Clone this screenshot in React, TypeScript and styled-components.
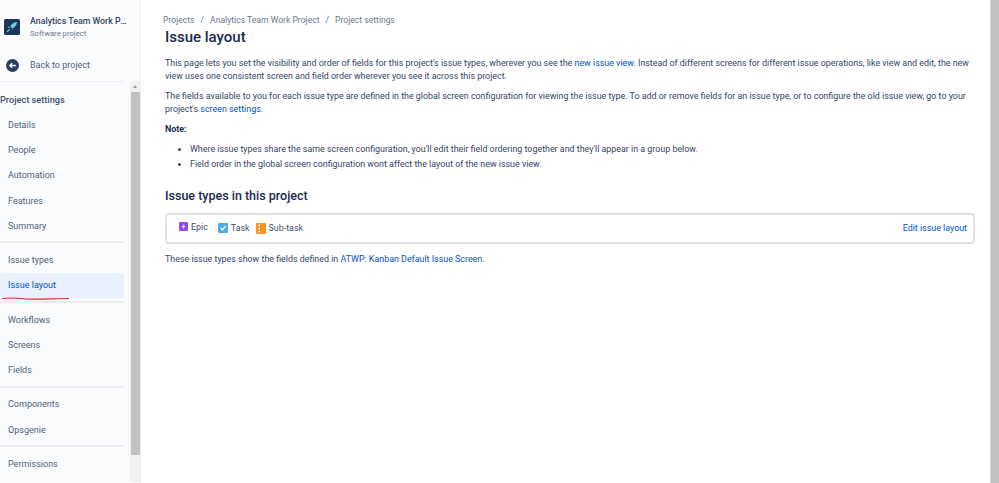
import React from "react";
import styled, { createGlobalStyle } from "styled-components";

const Global = createGlobalStyle`
  html, body {
    margin: 0;
    padding: 0;
    background: #fff;
  }
  * {
    box-sizing: border-box;
  }
`;

const Page = styled.div`
  width: 999px;
  height: 483px;
  overflow: hidden;
  display: flex;
  font-family: "Roboto", "Noto Sans", sans-serif;
  font-size: 8.9px;
  color: #344563;
  background: #fff;
`;

const Sidebar = styled.aside`
  position: relative;
  flex: 0 0 141px;
  height: 483px;
  background: #fafbfc;
  border-right: 1px solid #eef0f3;
  overflow: hidden;
`;

const ProjectHeader = styled.div`
  display: flex;
  align-items: center;
  gap: 10px;
  padding: 2px 0 0 4px;
  height: 52px;
`;

const ProjectText = styled.div`
  min-width: 0;
  width: 99px;
`;

const ProjectName = styled.div`
  font-size: 8.8px;
  font-weight: 500;
  line-height: 12px;
  color: #344563;
  white-space: nowrap;
  overflow: hidden;
  text-overflow: ellipsis;
`;

const ProjectType = styled.div`
  margin-top: 1px;
  font-size: 7.7px;
  line-height: 12px;
  color: #6b778c;
`;

const BackRow = styled.div`
  display: flex;
  align-items: center;
  gap: 11px;
  padding-left: 6px;
  height: 26px;
  font-size: 9px;
  color: #505f79;
`;

const SideBody = styled.div`
  display: flex;
  margin-top: 3px;
`;

const Nav = styled.nav`
  width: 124px;
  border-top: 1px solid #ebecf0;
`;

const NavTitle = styled.div`
  font-size: 9.2px;
  font-weight: 500;
  line-height: 13px;
  color: #42526e;
  padding-top: 11px;
  height: 30px;
`;

const NavGroup = styled.div`
  padding-bottom: 3px;
  margin-bottom: 3.9px;
  border-bottom: 2px solid #ebecf0;

  &:last-child {
    border-bottom: none;
  }
`;

const NavItem = styled.div<{ $active?: boolean }>`
  height: 25.3px;
  display: flex;
  align-items: center;
  padding-left: 8px;
  font-size: 9px;
  border-radius: 3px;
  color: ${(p) => (p.$active ? "#0052cc" : "#505f79")};
  background: ${(p) => (p.$active ? "#e8f1fd" : "transparent")};
`;

const ScrollTrack = styled.div`
  margin-left: 6px;
  width: 10px;
  height: 401px;
  background: #f1f1f1;
  display: flex;
  flex-direction: column;
  align-items: center;
`;

const ScrollArrow = styled.div`
  width: 0;
  height: 0;
  margin: 4px 0 4px;
  border-left: 2.5px solid transparent;
  border-right: 2.5px solid transparent;
  border-bottom: 3px solid #9a9a9a;
`;

const ScrollThumb = styled.div`
  width: 9px;
  height: 363px;
  background: #c1c1c1;
`;

const RedMark = styled.svg`
  position: absolute;
  left: 2px;
  top: 297px;
`;

const Main = styled.main`
  flex: 1;
  min-width: 0;
  padding: 14px 15px 0 24px;
`;

const Breadcrumbs = styled.div`
  display: flex;
  gap: 6px;
  margin-left: -2px;
  font-size: 8.6px;
  line-height: 12px;
  color: #6b778c;
`;

const Title = styled.h1`
  margin: 0 0 9px;
  font-size: 15px;
  font-weight: 500;
  line-height: 22px;
  color: #172b4d;
`;

const Para = styled.p`
  margin: 0 0 7px;
  line-height: 13px;
`;

const Link = styled.a`
  color: #0052cc;
  text-decoration: none;
`;

const NoteLabel = styled.div`
  margin-bottom: 7px;
  font-weight: 700;
  line-height: 13px;
  color: #172b4d;
`;

const BulletList = styled.ul`
  margin: 0;
  padding: 0 0 0 25px;
`;

const Bullet = styled.li`
  line-height: 13px;
  margin-bottom: 2px;
`;

const Heading = styled.h2`
  margin: 16px 0 8px;
  font-size: 12.5px;
  font-weight: 500;
  line-height: 18px;
  color: #172b4d;
`;

const Card = styled.div`
  height: 31px;
  border: 2px solid #dfe1e6;
  border-radius: 4px;
  display: flex;
  align-items: center;
  justify-content: space-between;
  padding: 0 6px 2px 12px;
`;

const TypeList = styled.div`
  display: flex;
  align-items: flex-start;
`;

const TypeItem = styled.div<{ $low?: boolean; $after: number }>`
  display: flex;
  align-items: center;
  gap: 3px;
  margin-top: ${(p) => (p.$low ? "1px" : "0")};
  margin-right: ${(p) => p.$after}px;
  color: #42526e;
`;

const Footer = styled.p`
  margin: 9px 0 0;
  line-height: 13px;
`;

const PageScrollbar = styled.div`
  flex: 0 0 9px;
  height: 483px;
  background: #c1c1c1;
  border-left: 1px solid #dcdcdc;
`;

const RocketLogo = () => (
  <svg width="16" height="16" viewBox="0 0 16 16">
    <rect width="16" height="16" rx="1.5" fill="#1d3557" />
    <path d="M12.5 3c-3 .2-5 2-6.2 4.600l2 2C11 8.400 12.800 6 13 3.300z" fill="#5fd3e6" />
    <path d="M5.800 7.600 3.800 8.200l1.400 1zM8.300 9.800l-.6 2 1-1.400z" fill="#8be0ee" />
    <path d="M5.600 10.300 3.200 12.800" stroke="#7fdbe9" strokeWidth="1.100" />
  </svg>
);

const BackIcon = () => (
  <svg width="13" height="13" viewBox="0 0 13 13">
    <circle cx="6.500" cy="6.500" r="6.500" fill="#2b3f60" />
    <path d="M9.800 6.500H4M6.200 4.200 3.800 6.500l2.400 2.300" stroke="#fff" strokeWidth="1.300" fill="none" />
  </svg>
);

const EpicIcon = () => (
  <svg width="9" height="9" viewBox="0 0 10 10">
    <rect width="10" height="10" rx="1.200" fill="#904ee2" />
    <path d="M5.700 2 3 5.500h1.800L4.300 8 7 4.500H5.200z" fill="#fff" />
  </svg>
);

const TaskIcon = () => (
  <svg width="10" height="10" viewBox="0 0 10 10">
    <rect width="10" height="10" rx="1.200" fill="#4bade8" />
    <path d="M2.700 5.200 4.400 6.900 7.400 3.300" stroke="#fff" strokeWidth="1.400" fill="none" />
  </svg>
);

const SubtaskIcon = () => (
  <svg width="10" height="11" viewBox="0 0 10 11">
    <rect width="10" height="11" rx="0.800" fill="#f7931e" />
    <rect x="2.400" y="1.600" width="1.600" height="1.600" fill="#fff" />
    <rect x="2.400" y="4.700" width="1.600" height="1.600" fill="#fff" />
    <rect x="2.400" y="7.800" width="1.600" height="1.600" fill="#fff" />
  </svg>
);

const navGroups = [
  [{ label: "Details" }, { label: "People" }, { label: "Automation" }, { label: "Features" }, { label: "Summary" }],
  [{ label: "Issue types" }, { label: "Issue layout", active: true }],
  [{ label: "Workflows" }, { label: "Screens" }, { label: "Fields" }],
  [{ label: "Components" }, { label: "Opsgenie" }],
  [{ label: "Permissions" }],
];

export default function App() {
  return (
    <Page>
      <Global />
      <Sidebar>
        <ProjectHeader>
          <RocketLogo />
          <ProjectText>
            <ProjectName>Analytics Team Work Project</ProjectName>
            <ProjectType>Software project</ProjectType>
          </ProjectText>
        </ProjectHeader>
        <BackRow>
          <BackIcon />
          Back to project
        </BackRow>
        <SideBody>
          <Nav>
            <NavTitle>Project settings</NavTitle>
            {navGroups.map((group, i) => (
              <NavGroup key={i}>
                {group.map((item) => (
                  <NavItem key={item.label} $active={item.active}>
                    {item.label}
                  </NavItem>
                ))}
              </NavGroup>
            ))}
          </Nav>
          <ScrollTrack>
            <ScrollArrow />
            <ScrollThumb />
          </ScrollTrack>
        </SideBody>
        <RedMark width="68" height="4" viewBox="0 0 68 4">
          <path d="M0 1.500C8 .5 16 1 24 2c14 .5 28-.5 43-.5" stroke="#e0202a" strokeWidth="1.100" fill="none" />
        </RedMark>
      </Sidebar>
      <Main>
        <Breadcrumbs>
          <span>Projects</span>
          <span>/</span>
          <span>Analytics Team Work Project</span>
          <span>/</span>
          <span>Project settings</span>
        </Breadcrumbs>
        <Title>Issue layout</Title>
        <Para>
          This page lets you set the visibility and order of fields for this project's issue types, wherever you see the{" "}
          <Link>new issue view</Link>. Instead of different screens for different issue operations, like view and edit, the new
          view uses one consistent screen and field order wherever you see it across this project.
        </Para>
        <Para>
          The fields available to you for each issue type are defined in the global screen configuration for viewing the issue
          type. To add or remove fields for an issue type, or to configure the old issue view, go to your project's{" "}
          <Link>screen settings</Link>.
        </Para>
        <NoteLabel>Note:</NoteLabel>
        <BulletList>
          <Bullet>Where issue types share the same screen configuration, you'll edit their field ordering together and they'll appear in a group below.</Bullet>
          <Bullet>Field order in the global screen configuration wont affect the layout of the new issue view.</Bullet>
        </BulletList>
        <Heading>Issue types in this project</Heading>
        <Card>
          <TypeList>
            <TypeItem $after={10}>
              <EpicIcon />
              Epic
            </TypeItem>
            <TypeItem $low $after={6}>
              <TaskIcon />
              Task
            </TypeItem>
            <TypeItem $low $after={0}>
              <SubtaskIcon />
              Sub-task
            </TypeItem>
          </TypeList>
          <Link>Edit issue layout</Link>
        </Card>
        <Footer>
          These issue types show the fields defined in <Link>ATWP: Kanban Default Issue Screen</Link>.
        </Footer>
      </Main>
      <PageScrollbar />
    </Page>
  );
}
